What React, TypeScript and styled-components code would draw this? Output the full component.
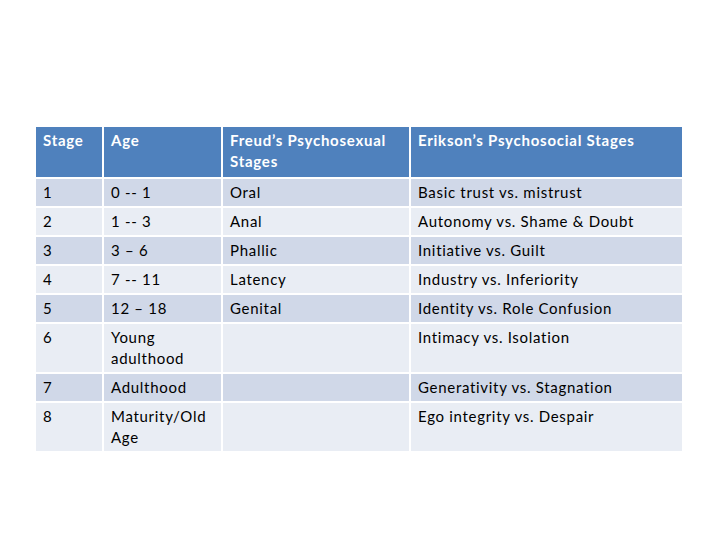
import * as React from "react";
import styled, { createGlobalStyle } from "styled-components";

const GlobalStyle = createGlobalStyle`
  html, body {
    margin: 0;
    padding: 0;
    background: #ffffff;
  }
`;

const rows = [
  { stage: "1", age: "0 -- 1", freud: "Oral", erikson: "Basic trust vs. mistrust" },
  { stage: "2", age: "1 -- 3", freud: "Anal", erikson: "Autonomy vs. Shame & Doubt" },
  { stage: "3", age: "3 – 6", freud: "Phallic", erikson: "Initiative vs. Guilt" },
  { stage: "4", age: "7 -- 11", freud: "Latency", erikson: "Industry vs. Inferiority" },
  { stage: "5", age: "12 – 18", freud: "Genital", erikson: "Identity vs. Role Confusion" },
  { stage: "6", age: "Young adulthood", freud: "", erikson: "Intimacy vs. Isolation" },
  { stage: "7", age: "Adulthood", freud: "", erikson: "Generativity vs. Stagnation" },
  { stage: "8", age: "Maturity/Old Age", freud: "", erikson: "Ego integrity vs. Despair" },
];

export default function App() {
  return (
    <Page>
      <GlobalStyle />
      <Table>
        <colgroup>
          <col style={{ width: 66 }} />
          <col style={{ width: 117 }} />
          <col style={{ width: 186 }} />
          <col style={{ width: 271 }} />
        </colgroup>
        <thead>
          <tr>
            <HeadCell>Stage</HeadCell>
            <HeadCell>Age</HeadCell>
            <HeadCell>Freud’s Psychosexual Stages</HeadCell>
            <HeadCell>Erikson’s Psychosocial Stages</HeadCell>
          </tr>
        </thead>
        <tbody>
          {rows.map((row, i) => (
            <tr key={row.stage}>
              <Cell $odd={i % 2 === 0}>{row.stage}</Cell>
              <Cell $odd={i % 2 === 0}>{row.age}</Cell>
              <Cell $odd={i % 2 === 0}>{row.freud}</Cell>
              <Cell $odd={i % 2 === 0}>{row.erikson}</Cell>
            </tr>
          ))}
        </tbody>
      </Table>
    </Page>
  );
}

const Page = styled.div`
  width: 720px;
  height: 540px;
  box-sizing: border-box;
  padding: 125px 0 0 34px;
  font-family: Lato, "Liberation Sans", sans-serif;
`;

const Table = styled.table`
  border-collapse: separate;
  border-spacing: 2px;
  table-layout: fixed;
  width: 650px;
`;

const HeadCell = styled.th`
  background: #4f81bd;
  color: #ffffff;
  font-weight: 700;
  font-size: 15px;
  letter-spacing: 0.75px;
  line-height: 21px;
  text-align: left;
  vertical-align: top;
  padding: 3px 7px 4px;
  border-bottom: 1px solid #4f81bd;
  height: 40px;
`;

const Cell = styled.td<{ $odd: boolean }>`
  background: ${p => (p.$odd ? "#d0d8e8" : "#e9edf4")};
  color: #000000;
  font-size: 15px;
  letter-spacing: 0.7px;
  line-height: 21px;
  text-align: left;
  vertical-align: top;
  padding: 3px 7px;
`;
